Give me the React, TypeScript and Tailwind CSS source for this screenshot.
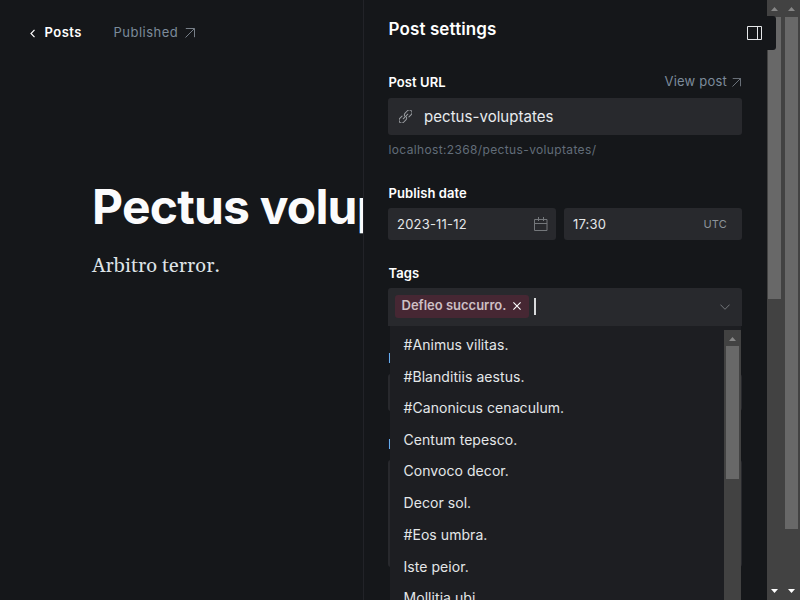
import React from 'react';

const tags = [
  '#Animus vilitas.',
  '#Blanditiis aestus.',
  '#Canonicus cenaculum.',
  'Centum tepesco.',
  'Convoco decor.',
  'Decor sol.',
  '#Eos umbra.',
  'Iste peior.',
  'Mollitia ubi.',
];

function ArrowUpRight({ className }: { className: string }) {
  return (
    <svg className={className} viewBox="0 0 10 10" fill="none" stroke="currentColor">
      <path d="M0.5 9.5 9.3 0.7M0.8 0.5H9.5V9.2" />
    </svg>
  );
}

function Triangle({ down = false, className }: { down?: boolean; className: string }) {
  return (
    <svg className={className} viewBox="0 0 7 4" fill="currentColor">
      <path d={down ? 'M0 0H7L3.5 4Z' : 'M0 4H7L3.5 0Z'} />
    </svg>
  );
}

function Label({ children }: { children: React.ReactNode }) {
  return <div className="h-4 pl-[0.5px] text-[13px] leading-4 font-semibold tracking-[0.08px] text-white">{children}</div>;
}

function Editor() {
  return (
    <main className="h-full w-[363px] shrink-0 overflow-hidden">
      <header className="flex h-[66px] items-center pl-[30px] text-[13px] tracking-[0.5px]">
        <svg className="mr-[9.5px] h-[9px] w-[5px] text-white" viewBox="0 0 5 9" fill="none" stroke="currentColor" strokeWidth="1.2">
          <path d="M4.5 .8 1 4.5 4.5 8.2" />
        </svg>
        <span className="w-[69px] font-semibold text-white">Posts</span>
        <span className="text-[#7c8b9a]">Published</span>
        <ArrowUpRight className="mb-px ml-[7px] h-[10px] w-[10px] text-[#777f88]" />
      </header>
      <div className="pt-[111px] pl-[92px]">
        <h1 className="h-[60px] text-[48px] leading-[60px] font-bold tracking-[-0.8px] whitespace-nowrap text-[#fbfbfc]">Pectus voluptates</h1>
        <p className="mt-[13px] font-[Gelasio,'Liberation_Serif',serif] text-[20px] leading-8 tracking-[0.08px] text-[#dee3e7]">Arbitro terror.</p>
      </div>
    </main>
  );
}

function TagMenu() {
  return (
    <div className="absolute top-[38px] left-[2px] flex h-[274px] w-[351px] overflow-hidden bg-[#1d1e22]">
      <ul className="flex-1 pt-[3px]">
        {tags.map((tag) => (
          <li key={tag} className="h-8 pl-[13.5px] text-[14px] leading-[32px] tracking-[0.06px] text-[#e4e7e9] nth-2:h-[31px] nth-4:h-[31px] nth-8:h-[31px]">
            {tag}
          </li>
        ))}
      </ul>
      <div className="mt-1 flex w-[17px] flex-col items-center bg-[#424242]">
        <div className="flex h-4 items-center pt-px">
          <Triangle className="h-1 w-[7px] text-[#868686]" />
        </div>
        <div className="h-[133px] w-[13px] bg-[#686868]" />
      </div>
    </div>
  );
}

function Settings() {
  return (
    <aside className="relative h-full w-[404px] shrink-0 border-l border-[#222328] bg-[#15171a] pl-6">
      <div className="flex h-[600px] w-[354px] flex-col overflow-hidden pt-[17px]">
        <h2 className="h-6 pl-[0.5px] text-[17px] leading-6 font-semibold tracking-[0.12px] text-white">Post settings</h2>
        <div className="mt-[33px] flex h-4 items-center justify-between">
          <Label>Post URL</Label>
          <span className="flex items-center text-[13px] leading-4 tracking-[0.2px] text-[#7c8b9a]">
            <span className="pb-[2px]">View post</span>
            <ArrowUpRight className="mr-px ml-[5px] h-[9px] w-[9px] text-[#777f88]" />
          </span>
        </div>
        <div className="mt-2 flex h-[37px] shrink-0 items-center rounded-[3px] bg-[#28292d] pl-[11px] text-[15px] tracking-[0.05px] text-[#e9ecef]">
          <svg className="mr-[12px] h-[13px] w-[13px] text-[#9a9da1]" viewBox="0 0 24 24" fill="none" stroke="currentColor" strokeWidth="1.9" strokeLinecap="round">
            <g transform="rotate(-45 12 12)">
              <path d="M8 7H2a5 5 0 0 0 0 10h6a5 5 0 0 0 4.500-3M16 17H22a5 5 0 0 0 0-10h-6a5 5 0 0 0-4.500 3" />
              <path d="M6 12h12" />
            </g>
          </svg>
          <span className="pt-px">pectus-voluptates</span>
        </div>
        <div className="mt-[7px] h-4 pl-[0.5px] text-[12px] leading-4 tracking-[0.36px] text-[#626d79]">localhost:2368/pectus-voluptates/</div>
        <div className="mt-[27px]"><Label>Publish date</Label></div>
        <div className="mt-[7px] flex h-8 shrink-0 gap-2 text-[13px] tracking-[0.2px] text-[#e4e7e9]">
          <div className="flex w-[168px] items-center justify-between rounded-[3px] bg-[#28292d] pr-2 pl-[9px]">
            <span className="pt-px">2023-11-12</span>
            <svg className="h-[14px] w-[14px] text-[#74777b]" viewBox="0 0 14 14" fill="none" stroke="currentColor">
              <path d="M.5 2.500H13V13.500H.5ZM.5 6.500H13M4.500 0V4M9.500 0V4" />
            </svg>
          </div>
          <div className="flex w-[178px] items-center justify-between rounded-[3px] bg-[#28292d] pr-[15px] pl-[9px]">
            <span className="pt-px">17:30</span>
            <span className="text-[11px] text-[#8c939a]">UTC</span>
          </div>
        </div>
        <div className="mt-[25px]"><Label>Tags</Label></div>
        <div className="relative mt-[7px] h-[38px] shrink-0">
          <div className="flex h-[38px] items-center rounded-t-[3px] bg-[#28292d] pr-[12px] pl-[7px]">
            <span className="-mt-[2px] flex h-[23px] w-[134px] items-center justify-between rounded-[3px] bg-[#462733] pr-[8px] pl-[6.500px] text-[13px] font-semibold text-[#cdbfc4]">
              Defleo succurro.
              <svg className="h-[8px] w-[8px] text-white" viewBox="0 0 8 8" fill="none" stroke="currentColor" strokeWidth="1.1">
                <path d="m.4.4 7.200 7.200m0-7.200-7.200 7.200" />
              </svg>
            </span>
            <span className="-mt-px ml-[5px] h-[17px] w-[2px] bg-[#d8dadc]" />
            <svg className="ml-auto h-[6px] w-[10px] text-[#74777b]" viewBox="0 0 10 6" fill="none" stroke="currentColor">
              <path d="m.4.6 4.600 4.700L9.600.6" />
            </svg>
          </div>
          <TagMenu />
        </div>
        <div className="mt-[24px]"><Label>Post access</Label></div>
        <div className="mt-[8px] h-[37px] shrink-0 rounded-[3px] bg-[#28292d]" />
        <div className="mt-[25px]"><Label>Excerpt</Label></div>
        <div className="mt-[8px] h-[107px] shrink-0 rounded-[3px] bg-[#28292d]" />
      </div>
      <button className="absolute top-4 right-[-9px] z-10 flex h-[34px] w-[38px] items-center rounded-r-[3px] bg-[#15171a] pb-[2px] pl-2" aria-label="Toggle settings">
        <svg className="h-[15px] w-[16px] text-[#e5e7e9]" viewBox="0 0 16 15" fill="none" stroke="currentColor">
          <path d="M1.500 1.500H15.500V14.500H1.500ZM11.500 1.500V14.500" />
        </svg>
      </button>
    </aside>
  );
}

export default function App() {
  return (
    <div className="flex h-[600px] w-[800px] overflow-hidden bg-[#15171a] font-[Inter,sans-serif]">
      <Editor />
      <Settings />
      <div className="flex w-[17px] shrink-0 flex-col items-start bg-[#424242] pl-px">
        <div className="flex h-[17px] items-center pl-[3px]"><Triangle className="h-1 w-[7px] text-[#868686]" /></div>
        <div className="h-[282px] w-[13px] bg-[#686868]" />
        <Triangle down className="mt-auto mb-[7px] ml-[3px] h-1 w-[7px] text-white" />
      </div>
      <div className="flex w-4 shrink-0 flex-col items-start bg-[#424242] pl-px">
        <div className="flex h-[17px] items-center pl-[3px]"><Triangle className="h-1 w-[7px] text-[#868686]" /></div>
        <div className="h-[512px] w-[13px] bg-[#686868]" />
        <Triangle down className="mt-auto mb-[7px] ml-[3px] h-1 w-[7px] text-white" />
      </div>
    </div>
  );
}
